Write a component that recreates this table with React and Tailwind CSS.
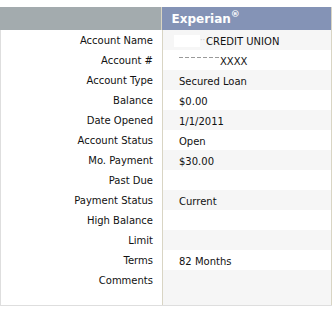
const rows = [
  { label: "Account Name", value: "name" },
  { label: "Account #", value: "acct" },
  { label: "Account Type", value: "Secured Loan" },
  { label: "Balance", value: "$0.00" },
  { label: "Date Opened", value: "1/1/2011" },
  { label: "Account Status", value: "Open" },
  { label: "Mo. Payment", value: "$30.00" },
  { label: "Past Due", value: "" },
  { label: "Payment Status", value: "Current" },
  { label: "High Balance", value: "" },
  { label: "Limit", value: "" },
  { label: "Terms", value: "82 Months" },
  { label: "Comments", value: "", tall: true },
];

const Value = ({ value }) => {
  if (value === "name") {
    return (
      <span className="flex items-center -ml-[5px]">
        <span className="inline-block w-[26px] h-[12px] bg-white" />
        <span className="text-[#c8c8c8] text-[8px] mr-[1px]">··</span>
        <span>CREDIT UNION</span>
      </span>
    );
  }
  if (value === "acct") {
    return (
      <span className="flex items-center">
        <span className="flex gap-[2px] mr-[1px] -mt-[7px]">
          {[0, 1, 2, 3, 4, 5, 6].map((i) => (
            <span key={i} className="inline-block w-[4px] h-px bg-[#9a9a9a]" />
          ))}
        </span>
        <span>XXXX</span>
      </span>
    );
  }
  return <span>{value}</span>;
};

export default function App() {
  return (
    <div className="w-[332px] h-[317px] bg-white pt-[7px] text-[10px] text-[#111] font-['DejaVu_Sans',Verdana,sans-serif]">
      <div className="flex h-[23px]">
        <div className="w-[162px] bg-[#a3abae] border-r border-[#d9d5c4] box-content" />
        <div className="w-[161px] bg-[#8493b6] border-r border-[#d9d5c4] box-content flex items-center pl-[10px] text-white font-bold text-[12px]">
          Experian<sup className="text-[9px] -top-[5px]">®</sup>
        </div>
        <div className="flex-1 bg-[#d58894]" />
      </div>
      <div className="border-b border-l border-[#dedede]">
        {rows.map((r, i) => (
          <div key={r.label} className={`flex ${r.tall ? "h-[35px]" : "h-[20px]"}`}>
            <div className="w-[161px] pr-[9px] pt-px text-right leading-[20px] border-r border-[#d9d5c4] box-content">
              {r.label}
            </div>
            <div
              className={`w-[161px] pl-[16px] pt-px border-r border-[#d9d5c4] box-content ${
                i % 2 === 0 ? "bg-[#f6f6f6]" : "bg-white"
              }`}
            >
              <div className="h-[20px] flex items-center">
                <Value value={r.value} />
              </div>
            </div>
            <div className={`flex-1 ${i % 2 === 0 ? "bg-[#f6f6f6]" : "bg-white"}`} />
          </div>
        ))}
      </div>
    </div>
  );
}
